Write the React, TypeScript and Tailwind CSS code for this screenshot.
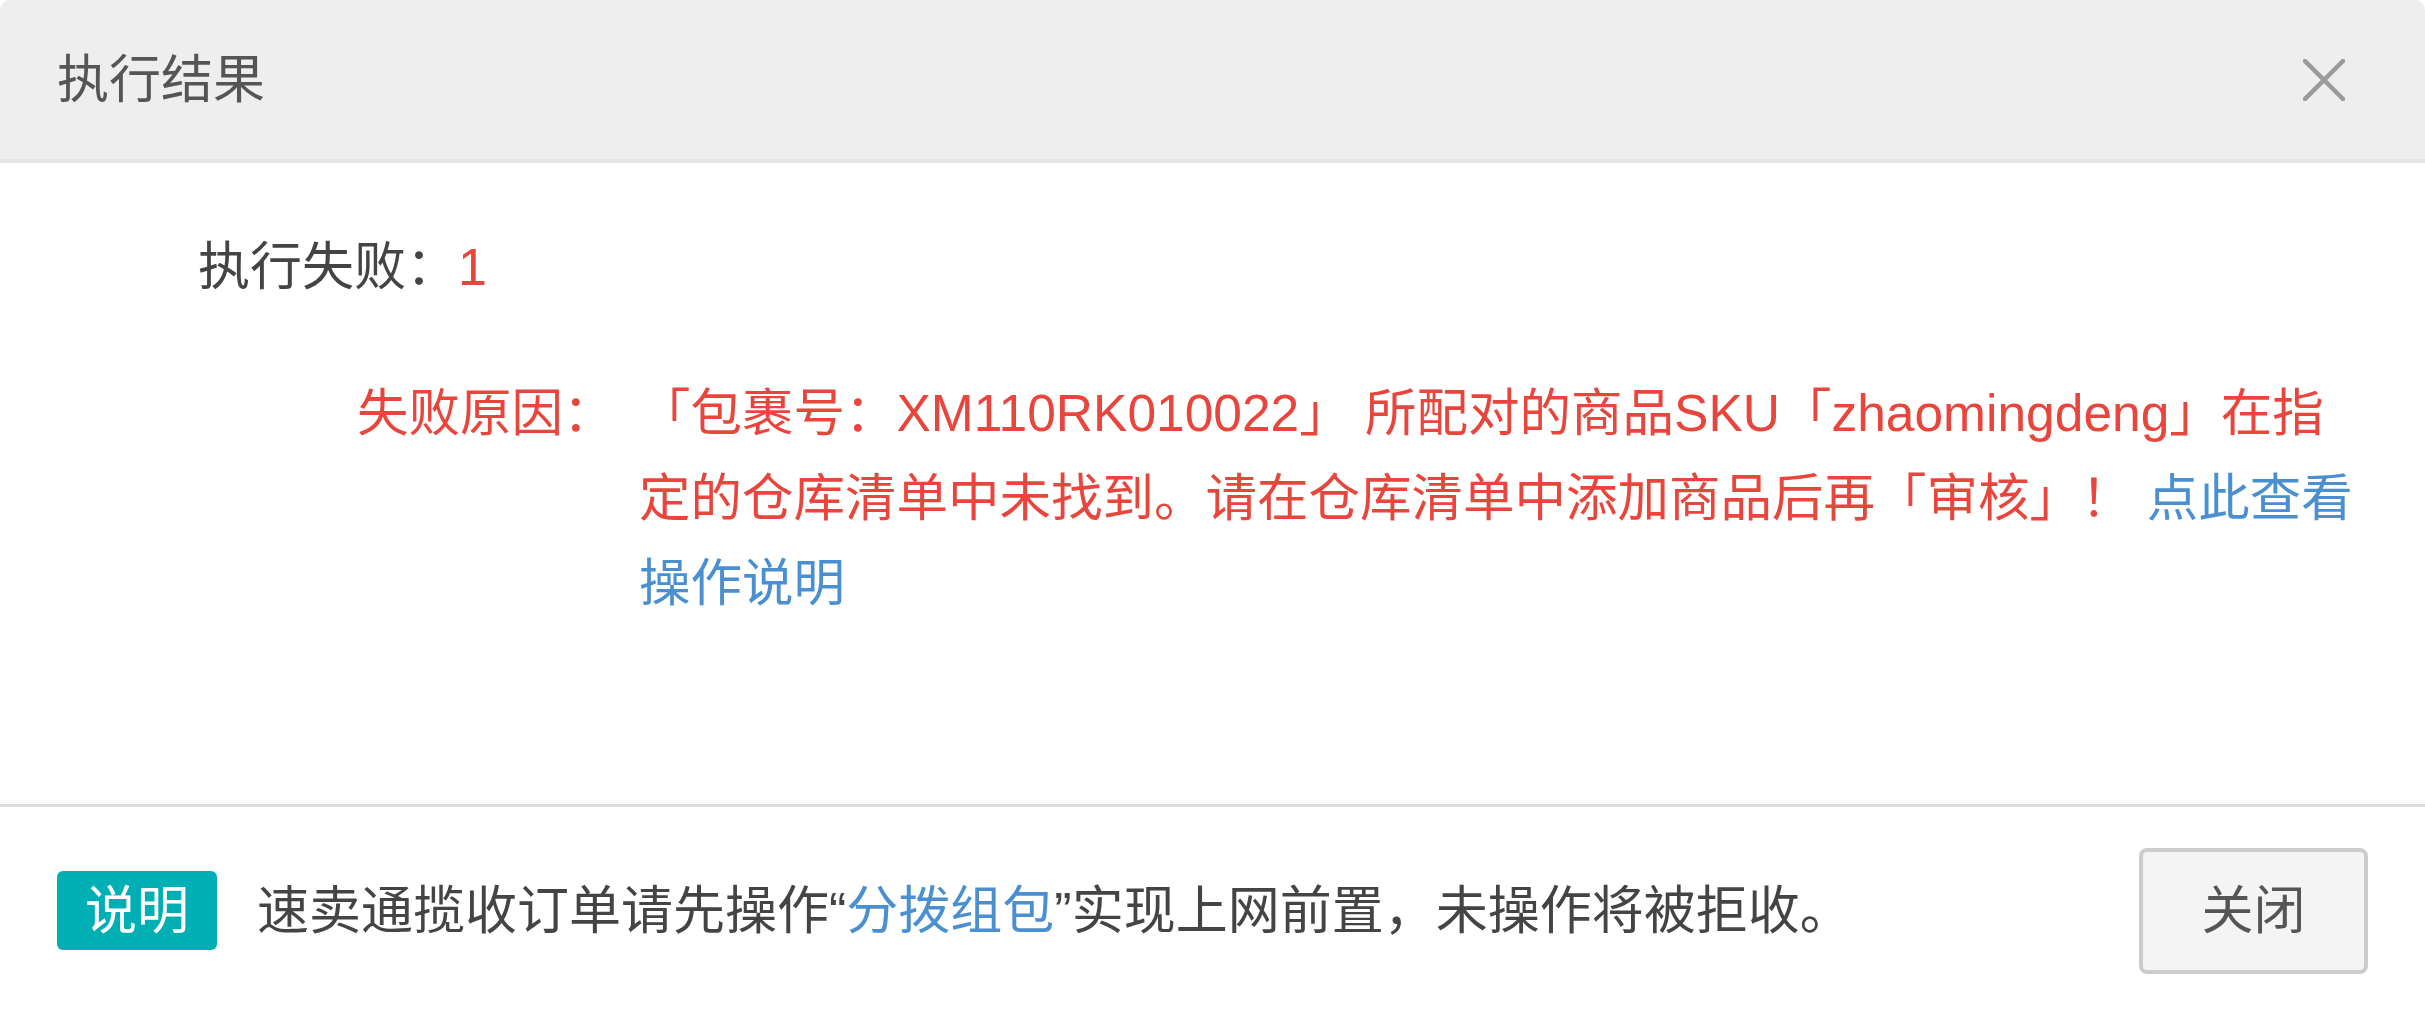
const font = "font-['Liberation_Sans','Noto_Sans_CJK_SC',sans-serif]";

export default function App() {
    return (
        <div className={`flex h-[1014px] w-[2425px] flex-col overflow-hidden rounded-t-[10px] bg-white ${font}`}>
            <div className="flex h-[163px] shrink-0 items-center justify-between border-b-4 border-[#e5e5e5] bg-[#eeeeee] pl-[57px] pr-[80px]">
                <h1 className="text-[52px] leading-none font-normal text-[#555]">执行结果</h1>
                <button type="button" className="text-[#9a9a9a]">
                    <svg width="42" height="42" viewBox="0 0 42 42" className="block">
                        <path d="M2 2L40 40M40 2L2 40" stroke="currentColor" strokeWidth="4.5" strokeLinecap="square" />
                    </svg>
                </button>
            </div>

            <div className="flex-1 pt-[62px] text-[52px] leading-[85px]">
                <p className="pl-[198px] text-[#444]">
                    执行失败：<span className="text-[#e8453c]">1</span>
                </p>

                <div className="mt-[61px] flex text-[51.5px] text-[#e8453c]">
                    <span className="w-[639px] shrink-0 pl-[357px]">失败原因：</span>
                    <p className="w-[1725px]">
                        「包裹号：XM110RK010022」 所配对的商品SKU「zhaomingdeng」在指定的仓库清单中未找到。请在仓库清单中添加商品后再「审核」！{" "}
                        <a href="#" className="text-[#4a8fd0]">点此查看操作说明</a>
                    </p>
                </div>
            </div>

            <div className="flex h-[210px] shrink-0 items-center justify-between border-t-[3px] border-[#dddddd] px-[57px]">
                <div className="flex items-center gap-[40px] text-[52px]">
                    <span className="flex h-[79px] w-[160px] items-center justify-center rounded-[6px] bg-[#00afb3] text-white">
                        说明
                    </span>
                    <p className="text-[#444]">
                        速卖通揽收订单请先操作“<span className="text-[#4a8fd0]">分拨组包</span>”实现上网前置，未操作将被拒收。
                    </p>
                </div>
                <button
                    type="button"
                    className="h-[126px] w-[229px] rounded-[8px] border-4 border-[#cccccc] bg-[#f4f4f4] text-[52px] text-[#555]"
                >
                    关闭
                </button>
            </div>
        </div>
    );
}
